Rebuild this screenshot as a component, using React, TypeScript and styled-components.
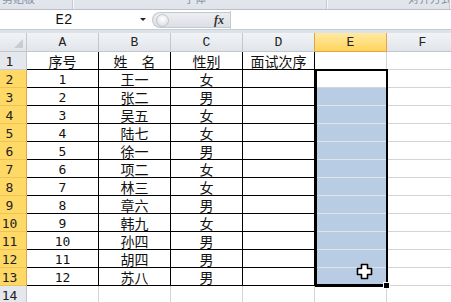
import React from "react";
import styled, { createGlobalStyle } from "styled-components";

const GlobalStyle = createGlobalStyle`
  html, body {
    margin: 0;
    padding: 0;
    background: #ffffff;
  }
  body {
    font-family: "DejaVu Sans Mono", "Noto Sans CJK SC", sans-serif;
  }
`;

const Window = styled.div`
  width: 451px;
  height: 302px;
  overflow: hidden;
  background: #ffffff;
`;

const Ribbon = styled.div`
  height: 10px;
  box-sizing: border-box;
  display: flex;
  background: linear-gradient(#e3e7ed, #dfe4ea);
  border-bottom: 1px solid #b9c0c9;
  overflow: hidden;
`;

const RibbonGroup = styled.div<{ $w: number; $pad: number }>`
  width: ${(p) => p.$w}px;
  flex: ${(p) => (p.$w === 0 ? 1 : "none")};
  box-sizing: border-box;
  padding-left: ${(p) => p.$pad}px;
  border-right: 1px solid #c4cad2;
  box-shadow: 1px 0 0 #f5f7fa;
  margin-right: 1px;
  overflow: hidden;
  height: 9px;

  span {
    display: block;
    font-family: "Noto Sans CJK SC", sans-serif;
    font-size: 11px;
    line-height: 11px;
    color: #8592a3;
    transform: translateY(-7px);
    white-space: nowrap;
  }
`;

const FormulaBar = styled.div`
  height: 20px;
  box-sizing: border-box;
  display: flex;
  align-items: stretch;
  background: #ffffff;
  border-bottom: 1px solid #c6ccd3;
`;

const NameBox = styled.div`
  width: 152px;
  position: relative;
  display: flex;
  align-items: center;
  justify-content: center;
  padding-right: 24px;
  box-sizing: border-box;
  font-family: "Liberation Mono", "Noto Sans CJK SC", monospace;
  font-size: 14px;
  line-height: 16px;
  color: #111;
`;

const DropArrow = styled.div`
  position: absolute;
  right: 6px;
  top: 8px;
  width: 0;
  height: 0;
  border-left: 3px solid transparent;
  border-right: 3px solid transparent;
  border-top: 3px solid #222;
`;

const FxPill = styled.div`
  width: 78px;
  margin: 2px 0 1px;
  box-sizing: border-box;
  display: flex;
  align-items: center;
  justify-content: space-between;
  padding: 0 6px 0 3px;
  border: 1px solid #c3c9d1;
  border-right: none;
  border-radius: 9px 0 0 9px;
  background: linear-gradient(#eceef2, #dcdfe4);
`;

const RoundKnob = styled.div`
  width: 11px;
  height: 11px;
  border-radius: 50%;
  border: 1px solid #c0c5cc;
  background: radial-gradient(circle at 50% 35%, #ffffff, #d5d9df);
`;

const FxLabel = styled.span`
  font-family: "Liberation Serif", serif;
  font-style: italic;
  font-weight: bold;
  font-size: 12px;
  line-height: 14px;
  color: #333;
`;

const FormulaInput = styled.div`
  flex: 1;
  margin: 1px 0 0;
  border-left: 1px solid #c3c9d1;
  background: #fff;
`;

const Strip = styled.div`
  height: 3px;
  background: #dde2e8;
`;

const SheetStack = styled.div`
  display: grid;
  > * {
    grid-area: 1 / 1;
  }
`;

const Sheet = styled.div`
  display: grid;
  grid-template-columns: 27px repeat(6, 72px);
  grid-template-rows: 19px repeat(14, 18px);
`;

const Overlay = styled(Sheet)`
  pointer-events: none;
`;

const Corner = styled.div`
  box-sizing: border-box;
  background: linear-gradient(#f1f3f6, #e1e5ea);
  border-right: 1px solid #c2c7ce;
  border-bottom: 1px solid #c2c7ce;
  position: relative;

  &::after {
    content: "";
    position: absolute;
    right: 3px;
    bottom: 3px;
    width: 0;
    height: 0;
    border-left: 9px solid transparent;
    border-bottom: 9px solid #c9cdd3;
  }
`;

const ColHead = styled.div<{ $active?: boolean }>`
  box-sizing: border-box;
  display: flex;
  align-items: center;
  justify-content: center;
  font-family: "Liberation Mono", monospace;
  font-size: 13px;
  line-height: 15px;
  color: #222;
  background: ${(p) =>
    p.$active
      ? "linear-gradient(#ffeaa4, #ffd45c)"
      : "linear-gradient(#f1f3f6, #e1e5ea)"};
  border-right: 1px solid ${(p) => (p.$active ? "#e2a64a" : "#c2c7ce")};
  border-bottom: 1px solid ${(p) => (p.$active ? "#e2a64a" : "#c2c7ce")};
  ${(p) => (p.$active ? "border-left: 1px solid #e2a64a; margin-left: -1px;" : "")}
`;

const RowHead = styled.div<{ $active?: boolean }>`
  box-sizing: border-box;
  display: flex;
  align-items: center;
  justify-content: center;
  padding: 1px 7px 0 0;
  font-family: "DejaVu Sans Mono", monospace;
  font-size: 13px;
  line-height: 15px;
  color: #222;
  background: ${(p) => (p.$active ? "#ffd966" : "#e4e8ed")};
  border-right: 1px solid ${(p) => (p.$active ? "#e3a349" : "#c2c7ce")};
  border-bottom: 1px solid ${(p) => (p.$active ? "#f0c25a" : "#c9ced5")};
`;

const Cell = styled.div<{ $boxed?: boolean; $fill?: boolean }>`
  box-sizing: border-box;
  display: flex;
  align-items: center;
  justify-content: center;
  padding-top: 1px;
  white-space: nowrap;
  overflow: hidden;
  font-family: "DejaVu Sans Mono", "Noto Sans CJK SC", sans-serif;
  font-size: 13px;
  line-height: 15px;
  color: #111;
  background: ${(p) => (p.$fill ? "#b8cce4" : "#ffffff")};
  border-right: 1px solid ${(p) => (p.$boxed ? "#000" : "#d4d4d4")};
  border-bottom: 1px solid
    ${(p) => (p.$boxed ? "#000" : p.$fill ? "#dfe3ea" : "#d4d4d4")};
`;

const CjkText = styled.span`
  font-family: "Noto Sans CJK SC", sans-serif;
  font-size: 14px;
  line-height: 15px;
`;

const Selection = styled.div`
  grid-column: 6;
  grid-row: 3 / 15;
  box-sizing: border-box;
  margin: -1px -1px -1px 0;
  border: 2px solid #000;
  border-bottom-width: 3px;
  position: relative;
`;

const FillHandle = styled.div`
  position: absolute;
  right: -4px;
  bottom: -5px;
  width: 5px;
  height: 5px;
  background: #000;
  border: 1px solid #fff;
`;

const CursorIcon = styled.svg`
  position: absolute;
  right: 13px;
  bottom: 4px;
`;

const columns = ["A", "B", "C", "D", "E", "F"];

const rows: [string, string, string, string][] = [
  ["序号", "姓　名", "性别", "面试次序"],
  ["1", "王一", "女", ""],
  ["2", "张二", "男", ""],
  ["3", "吴五", "女", ""],
  ["4", "陆七", "女", ""],
  ["5", "徐一", "男", ""],
  ["6", "项二", "女", ""],
  ["7", "林三", "女", ""],
  ["8", "章六", "男", ""],
  ["9", "韩九", "女", ""],
  ["10", "孙四", "男", ""],
  ["11", "胡四", "男", ""],
  ["12", "苏八", "男", ""],
];

const isCjk = (s: string) => /[\u3000-\u9fff]/.test(s);

const App = () => {
  return (
    <Window>
      <GlobalStyle />
      <Ribbon>
        <RibbonGroup $w={73} $pad={2}>
          <span>剪贴板</span>
        </RibbonGroup>
        <RibbonGroup $w={253} $pad={110}>
          <span>字体</span>
        </RibbonGroup>
        <RibbonGroup $w={0} $pad={80}>
          <span>对齐方式</span>
        </RibbonGroup>
      </Ribbon>
      <FormulaBar>
        <NameBox>
          E2
          <DropArrow />
        </NameBox>
        <FxPill>
          <RoundKnob />
          <FxLabel>fx</FxLabel>
        </FxPill>
        <FormulaInput />
      </FormulaBar>
      <Strip />
      <SheetStack>
        <Sheet>
          <Corner />
          {columns.map((c) => (
            <ColHead key={c} $active={c === "E"}>
              {c}
            </ColHead>
          ))}
          {rows.map((r, i) => (
            <React.Fragment key={i}>
              <RowHead $active={i > 0}>{i + 1}</RowHead>
              {r.map((v, j) => (
                <Cell key={j} $boxed>
                  {isCjk(v) ? <CjkText>{v}</CjkText> : v}
                </Cell>
              ))}
              <Cell $fill={i > 1} />
              <Cell />
            </React.Fragment>
          ))}
          <RowHead>14</RowHead>
          {columns.map((c) => (
            <Cell key={c} />
          ))}
        </Sheet>
        <Overlay>
          <Selection>
            <CursorIcon width="17" height="17" viewBox="0 0 17 17">
              <path
                d="M5.5 1.5h6v4h4v6h-4v4h-6v-4h-4v-6h4z"
                fill="#fff"
                stroke="#000"
                strokeWidth="1.6"
                strokeLinejoin="round"
              />
            </CursorIcon>
            <FillHandle />
          </Selection>
        </Overlay>
      </SheetStack>
    </Window>
  );
};

export default App;
